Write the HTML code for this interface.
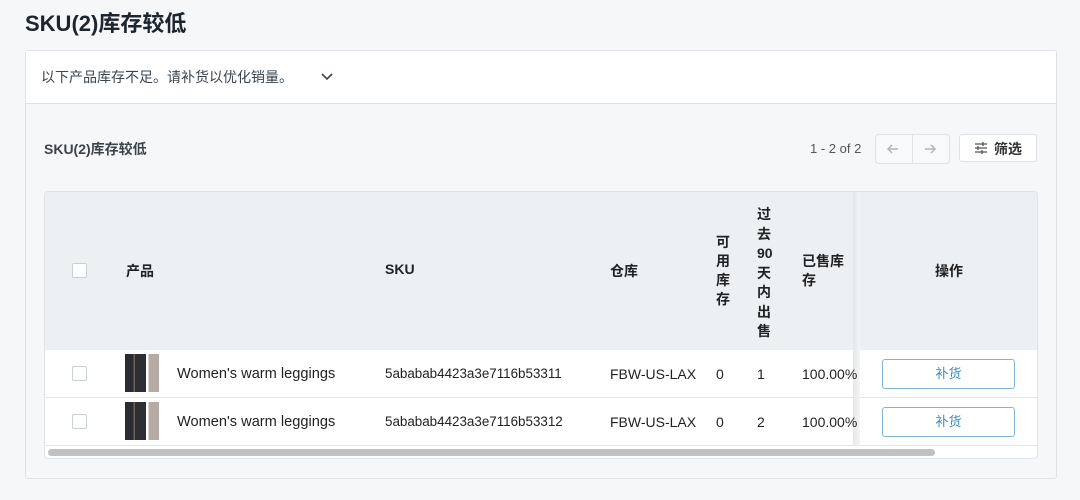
<!DOCTYPE html><html><head><meta charset="utf-8"><style>
*{margin:0;padding:0;box-sizing:border-box}
body{width:1080px;height:500px;background:#f6f7f9;font-family:"Liberation Sans","Noto Sans CJK SC",sans-serif;color:#212b36;position:relative;overflow:hidden}
.a{position:absolute}
.cb{position:absolute;width:15px;height:15px;border:1px solid #c9cfd6;border-radius:2px;background:#fff}
.h{font-size:14px;font-weight:bold;color:#222}
.t{font-size:14px;color:#222;line-height:18px}
.btn{position:absolute;width:133px;height:30px;border:1px solid #7fb6d6;border-radius:3px;background:#fff;color:#3a8fc4;font-size:13px;text-align:center;line-height:28px}
.img{position:absolute;width:38px;height:38px;background:linear-gradient(90deg,#2a2c31 0 22%,#6b625a 22% 26%,#2d2f34 26% 55%,#fff 55% 62%,#b7aca5 62% 90%,#fff 90%)}
</style></head><body>
<div class="a" style="left:25px;top:6px;font-size:22px;font-weight:bold;color:#1c2630">SKU(2)库存较低</div>
<div class="a" style="left:25px;top:50px;width:1032px;height:429px;border:1px solid #dfe3e8;border-radius:3px;background:#f5f7f9"></div>
<div class="a" style="left:26px;top:51px;width:1030px;height:53px;background:#fff;border-bottom:1px solid #dfe3e8"></div>
<div class="a" style="left:41px;top:67px;font-size:14px;color:#3b444d">以下产品库存不足。请补货以优化销量。</div>
<svg class="a" style="left:320px;top:72px" width="14" height="10"><path d="M2 2l5 5 5-5" stroke="#3b444d" stroke-width="1.6" fill="none"/></svg>
<div class="a" style="left:44px;top:139px;font-size:14px;font-weight:bold;color:#3b444d">SKU(2)库存较低</div>
<div class="a" style="left:810px;top:141px;font-size:13px;color:#555">1 - 2 of 2</div>
<div class="a" style="left:875px;top:134px;width:75px;height:30px;border:1px solid #dfe3e8;border-radius:4px;background:#f8f9fa"></div>
<div class="a" style="left:912px;top:134px;width:1px;height:30px;background:#dfe3e8"></div>
<svg class="a" style="left:886px;top:142px" width="14" height="14"><path d="M12 7H2M6 3L2 7l4 4" stroke="#b0b6bc" stroke-width="1.5" fill="none"/></svg>
<svg class="a" style="left:923px;top:142px" width="14" height="14"><path d="M2 7h10M8 3l4 4-4 4" stroke="#b0b6bc" stroke-width="1.5" fill="none"/></svg>
<div class="a" style="left:959px;top:134px;width:78px;height:28px;border:1px solid #dfe3e8;border-radius:3px;background:#fff"></div>
<svg class="a" style="left:974px;top:141px" width="14" height="14"><path d="M1 3h12M1 7h12M1 11h12" stroke="#555" stroke-width="1.3"/><path d="M9 1v4M4 5v4M8 9v4" stroke="#555" stroke-width="1.3"/></svg>
<div class="a" style="left:994px;top:139px;font-size:14px;font-weight:bold;color:#333">筛选</div>
<div class="a" style="left:44px;top:191px;width:994px;height:268px;border:1px solid #dfe3e8;border-radius:4px;background:#fff;overflow:hidden">
<div class="a" style="left:0;top:0;width:994px;height:158px;background:#edf0f3"></div>
<div class="a" style="left:0;top:205px;width:994px;height:1px;background:#e3e6e9"></div>
<div class="a" style="left:0;top:253px;width:994px;height:1px;background:#e3e6e9"></div>
<div class="a" style="left:808px;top:0;width:7px;height:254px;background:linear-gradient(90deg,#e4e7ea,#f4f5f6)"></div>
<div class="a" style="left:3px;top:257px;width:887px;height:7px;border-radius:4px;background:#c1c1c1"></div>
</div>
<div class="cb" style="left:72px;top:263px"></div>
<div class="a h" style="left:126px;top:261px">产品</div>
<div class="a h" style="left:385px;top:261px">SKU</div>
<div class="a h" style="left:610px;top:261px">仓库</div>
<div class="a h" style="left:716px;top:233px;width:16px;line-height:19px">可用库存</div>
<div class="a h" style="left:757px;top:205px;width:18px;line-height:19.5px">过去90天内出售</div>
<div class="a h" style="left:802px;top:252px;width:48px;line-height:19px">已售库存</div>
<div class="a h" style="left:935px;top:261px">操作</div>
<div class="cb" style="left:72px;top:366px"></div>
<div class="img" style="left:125px;top:354px"></div>
<div class="a t" style="left:177px;top:365px;font-size:14.6px">Women's warm leggings</div>
<div class="a t" style="left:385px;top:365px;font-size:13.4px">5ababab4423a3e7116b53311</div>
<div class="a t" style="left:610px;top:365px">FBW-US-LAX</div>
<div class="a t" style="left:716px;top:365px">0</div>
<div class="a t" style="left:757px;top:365px">1</div>
<div class="a t" style="left:802px;top:365px">100.00%</div>
<div class="btn" style="left:882px;top:359px">补货</div>
<div class="cb" style="left:72px;top:414px"></div>
<div class="img" style="left:125px;top:402px"></div>
<div class="a t" style="left:177px;top:413px;font-size:14.6px">Women's warm leggings</div>
<div class="a t" style="left:385px;top:413px;font-size:13.4px">5ababab4423a3e7116b53312</div>
<div class="a t" style="left:610px;top:413px">FBW-US-LAX</div>
<div class="a t" style="left:716px;top:413px">0</div>
<div class="a t" style="left:757px;top:413px">2</div>
<div class="a t" style="left:802px;top:413px">100.00%</div>
<div class="btn" style="left:882px;top:407px">补货</div>
</body></html>
